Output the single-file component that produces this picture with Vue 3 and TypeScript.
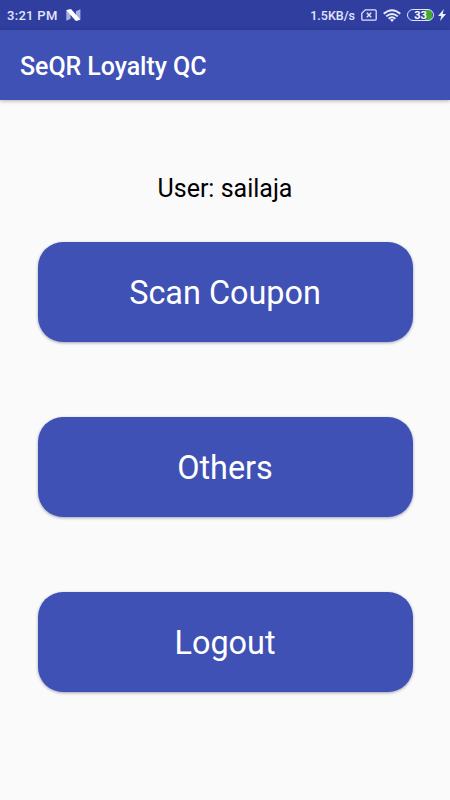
<script setup lang="ts">
const actions: string[] = ['Scan Coupon', 'Others', 'Logout']
</script>

<template>
  <div class="screen">
    <div class="status">
      <span class="clock">3:21 PM</span>
      <svg class="nougat" width="15" height="12" viewBox="0 0 15 12">
        <path d="M0.3 1L4.6 3.8V9.7L0.3 11.8ZM9.9 2.2L14.4 0.3V10.8L9.9 8.2Z" fill="#a9b1e4" />
        <path d="M0.3 1L5 0.1L14.4 10.8L9.8 11.9Z" fill="#fff" />
      </svg>
      <span class="speed">1.5KB/s</span>
      <svg class="sim" width="16" height="12" viewBox="0 0 16 12">
        <path d="M4.3 0.8H14a1.2 1.2 0 0 1 1.2 1.2V10A1.2 1.2 0 0 1 14 11.2H2A1.2 1.2 0 0 1 0.8 10V4.2Z" fill="none" stroke="#dfe3ff" stroke-width="1.3" />
        <path d="M5.8 3.8L10.2 8.2M10.2 3.8L5.8 8.2" stroke="#dfe3ff" stroke-width="1.5" />
      </svg>
      <svg class="wifi" width="18" height="13" viewBox="0 0 18 13">
        <g fill="none" stroke="#e8ebff" stroke-width="1.9">
          <path d="M0.7 4.7Q9 -2.4 17.3 4.7" />
          <path d="M3.2 7.4Q9 2.4 14.8 7.4" />
          <path d="M5.6 9.8Q9 6.8 12.4 9.8" />
        </g>
        <path d="M7 10.8Q9 9.3 11 10.8L9 13Z" fill="#e8ebff" />
      </svg>
      <div class="battery"><span>33</span></div>
      <svg class="bolt" width="8" height="12" viewBox="0 0 8 12">
        <path d="M5.9 0L0 6.9H3.3L2 12L8 4.9H4.6Z" fill="#eef0ff" />
      </svg>
    </div>
    <header class="bar">SeQR Loyalty QC</header>
    <main class="content">
      <p class="user">User: sailaja</p>
      <button v-for="label in actions" :key="label" class="action" type="button">
        {{ label }}
      </button>
    </main>
  </div>
</template>

<style>
body {
  margin: 0;
  background: #fafafa;
}
</style>

<style scoped>
.screen {
  display: flex;
  flex-direction: column;
  width: 450px;
  height: 800px;
  overflow: hidden;
  background: #fafafa;
  font-family: Roboto, 'Liberation Sans', sans-serif;
}
.status {
  display: flex;
  align-items: center;
  box-sizing: border-box;
  flex: none;
  height: 30px;
  padding: 0 4px 0 7px;
  background: #303f9f;
  color: #e2e6ff;
  font-size: 13px;
  font-weight: 500;
}
.clock {
  width: 51px;
  letter-spacing: 0.3px;
  white-space: nowrap;
}
.nougat {
  margin-left: 8px;
}
.speed {
  margin-left: auto;
  font-size: 12.5px;
}
.sim {
  margin-left: 6px;
}
.wifi {
  margin-left: 6px;
}
.battery {
  display: flex;
  align-items: center;
  justify-content: center;
  box-sizing: border-box;
  width: 27px;
  height: 12px;
  margin-left: 6px;
  padding-top: 2px;
  border: 1px solid #dfe3ff;
  border-radius: 6px;
  background: linear-gradient(90deg, transparent 17px, #43a836 17px) 0 0 / 24px 100% no-repeat;
  color: #fff;
  font-size: 11px;
  font-weight: 700;
  line-height: 10px;
}
.bolt {
  margin-left: 4px;
}
.bar {
  position: relative;
  display: flex;
  align-items: center;
  box-sizing: border-box;
  flex: none;
  height: 70px;
  padding: 2px 20px 0;
  background: #3f51b5;
  box-shadow: 0 1px 4px rgba(0, 0, 0, 0.3);
  color: #fff;
  font-size: 25px;
  font-weight: 500;
  letter-spacing: -0.07px;
}
.content {
  display: flex;
  flex-direction: column;
  align-items: center;
  padding-top: 74px;
}
.user {
  margin: 0 0 37.5px;
  color: #000;
  font-size: 25px;
  line-height: 30px;
}
.action {
  flex: none;
  width: 375px;
  height: 100px;
  margin: 0 0 75px;
  padding: 3px 0 0;
  border: 0;
  border-radius: 25px;
  background: #3f51b5;
  box-shadow: 0 1px 3px rgba(20, 30, 80, 0.4);
  color: #fff;
  font-family: inherit;
  font-size: 32.4px;
}
</style>
